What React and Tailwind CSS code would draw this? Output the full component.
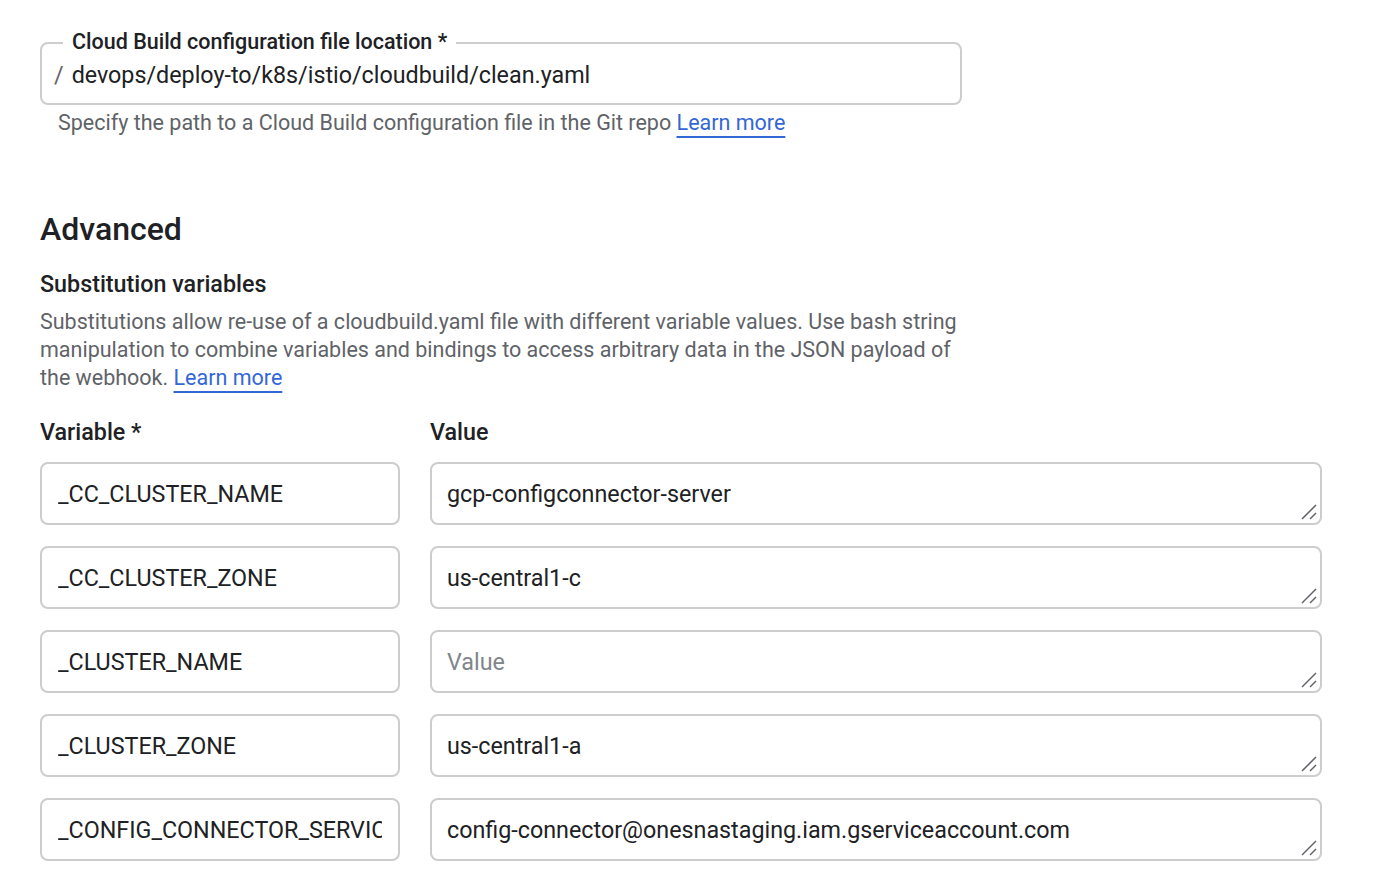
import React from "react";

const rows = [
  { k: "_CC_CLUSTER_NAME", v: "gcp-configconnector-server" },
  { k: "_CC_CLUSTER_ZONE", v: "us-central1-c" },
  { k: "_CLUSTER_NAME", v: "", ph: "Value" },
  { k: "_CLUSTER_ZONE", v: "us-central1-a" },
  { k: "_CONFIG_CONNECTOR_SERVICE_ACCOUNT", v: "config-connector@onesnastaging.iam.gserviceaccount.com" },
];

function Grip() {
  return (
    <svg width="16" height="16" viewBox="0 0 16 16" className="absolute right-[3px] bottom-[3px]">
      <line x1="1" y1="15" x2="15" y2="1" stroke="#5f6368" strokeWidth="1.5" />
      <line x1="9" y1="15" x2="15" y2="9" stroke="#5f6368" strokeWidth="1.5" />
    </svg>
  );
}

export default function App() {
  return (
    <div
      className="min-h-[886px] bg-white text-[#202124] pl-[40px] pt-[42px]"
      style={{ fontFamily: "Roboto, 'Liberation Sans', sans-serif" }}
    >
      <div className="relative w-[922px] h-[63px] border-2 border-[#cdcdcd] rounded-[8px] pl-[12px] flex items-center">
        <div className="absolute left-[21px] -top-[15px] bg-white px-[9px] text-[21.5px] leading-[26px] font-medium text-[#202124]">
          Cloud Build configuration file location *
        </div>
        <div className="flex items-center text-[23.3px] leading-[30px] mt-[3px]">
          <span className="text-[#5f6368] mr-[8px]">/</span>
          <span>devops/deploy-to/k8s/istio/cloudbuild/clean.yaml</span>
        </div>
      </div>
      <div className="pl-[18px] mt-[4px] text-[21.5px] leading-[28px] text-[#5f6368]">
        Specify the path to a Cloud Build configuration file in the Git repo{" "}
        <a className="text-[#3367d6] underline underline-offset-[6px] decoration-[1.5px]">Learn more</a>
      </div>

      <h2 className="mt-[72px] text-[32px] leading-[40px] font-medium text-[#202124]">Advanced</h2>
      <h3 className="mt-[20px] text-[23.3px] leading-[30px] font-medium text-[#202124]">Substitution variables</h3>
      <p className="mt-[9px] whitespace-nowrap text-[21.5px] leading-[28px] text-[#5f6368]">
        Substitutions allow re-use of a cloudbuild.yaml file with different variable values. Use bash string
        <br />
        manipulation to combine variables and bindings to access arbitrary data in the JSON payload of
        <br />
        the webhook.{" "}
        <a className="text-[#3367d6] underline underline-offset-[6px] decoration-[1.5px]">Learn more</a>
      </p>

      <div className="mt-[25px] flex gap-[30px] text-[23.3px] leading-[30px] font-medium">
        <div className="w-[360px]">Variable *</div>
        <div>Value</div>
      </div>

      <div className="mt-[15px] flex flex-col gap-[21px]">
        {rows.map((r) => (
          <div key={r.k} className="flex gap-[30px]">
            <div className="w-[360px] h-[63px] border-2 border-[#cdcdcd] rounded-[8px] px-[16px] flex items-center overflow-hidden">
              <span className="min-w-0 block whitespace-nowrap text-[23.3px] leading-[30px] overflow-hidden">{r.k}</span>
            </div>
            <div className="relative w-[892px] h-[63px] border-2 border-[#cdcdcd] rounded-[8px] px-[15px] flex items-center">
              {r.v ? (
                <span className="text-[23.3px] leading-[30px]">{r.v}</span>
              ) : (
                <span className="text-[23.3px] leading-[30px] text-[#80868b]">{r.ph}</span>
              )}
              <Grip />
            </div>
          </div>
        ))}
      </div>
    </div>
  );
}
